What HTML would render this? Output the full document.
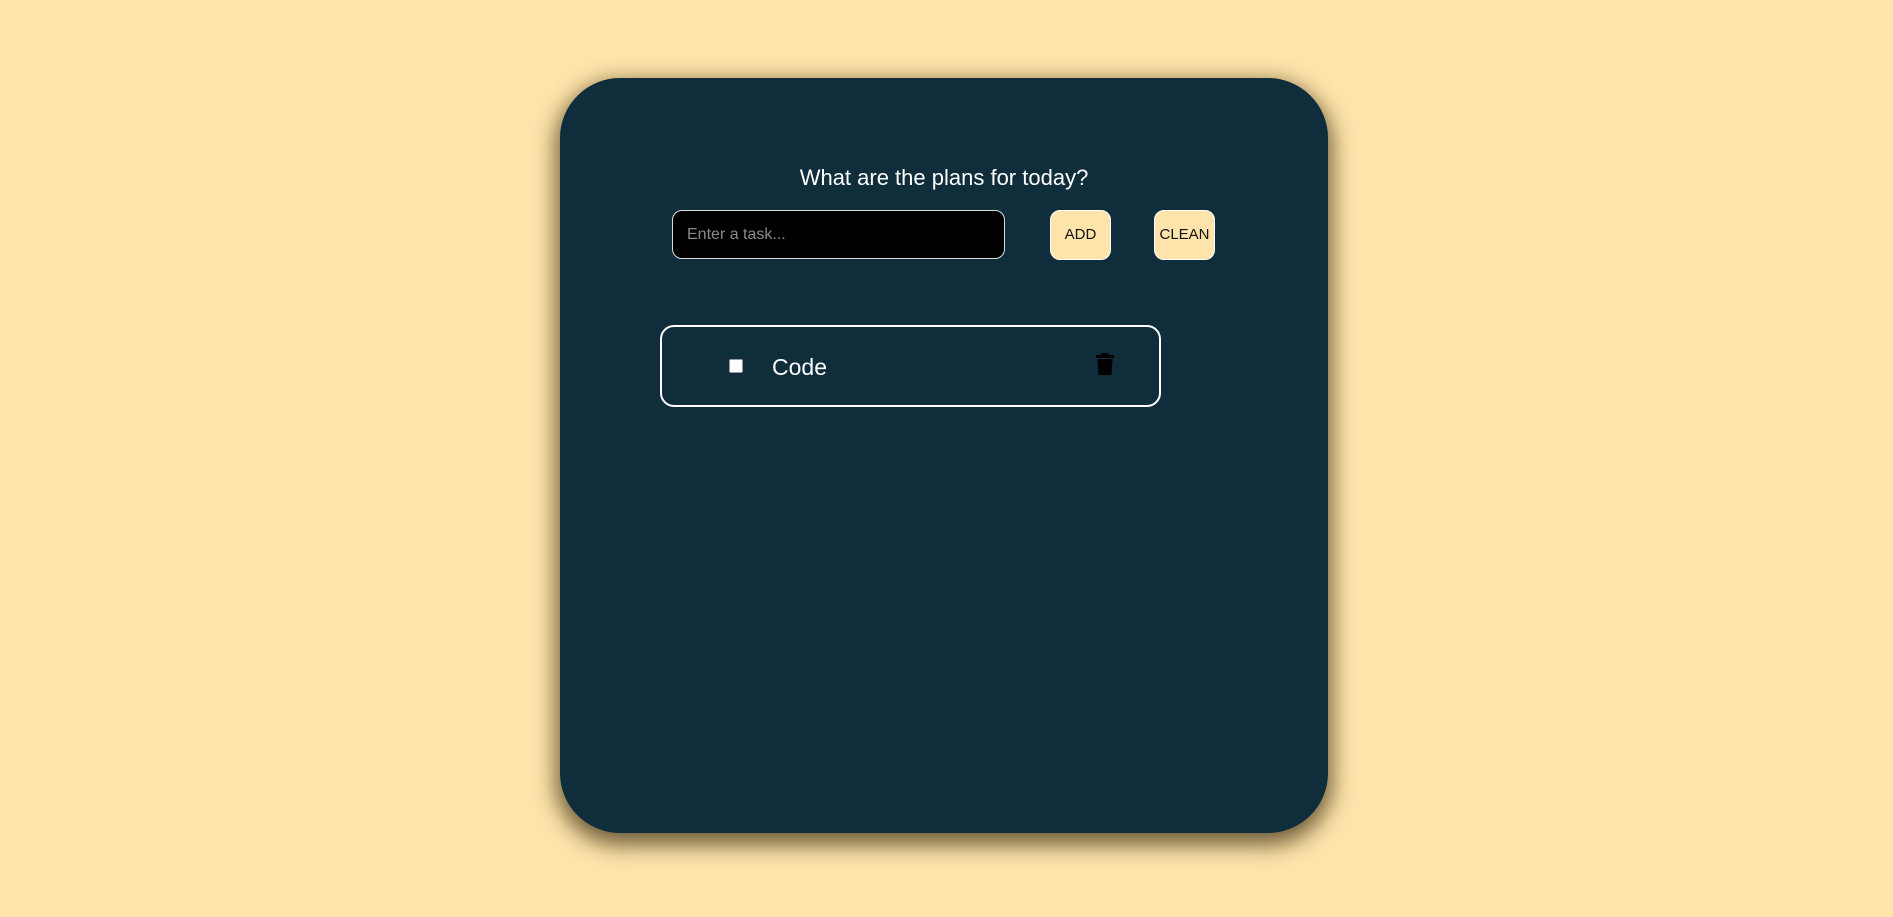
<!DOCTYPE html>
<html><head><style>
html,body{margin:0;padding:0;width:1893px;height:917px;background:#fee4aa;overflow:hidden;font-family:"Liberation Sans",sans-serif;}
.card{position:absolute;left:560px;top:78px;width:768px;height:755px;background:#0f2d3a;border-radius:60px;box-shadow:0 8px 22px 4px rgba(50,35,10,0.7);}
h1{position:absolute;left:0;width:768px;top:87px;margin:0;text-align:center;color:#fff;font-weight:300;font-size:22px;}
.inp{position:absolute;left:112px;top:132px;height:47px;background:#000;border:1.5px solid #ddd;border-radius:10px;color:#8a8a8a;font-size:16px;line-height:47px;padding-left:14px;box-sizing:content-box;width:317px;}
.btn{position:absolute;top:132px;width:59px;height:48px;background:#fee4aa;border:1px solid #fff;border-radius:10px;color:#111;font-size:15px;text-align:center;line-height:48px;}
.task{position:absolute;left:100px;top:247px;width:497px;height:78px;border:2px solid #fff;border-radius:14px;}
.cb{position:absolute;left:67px;top:32px;width:12px;height:12px;background:#fff;border:1px solid #999;border-radius:2px;}
.code{position:absolute;left:110px;top:27px;color:#fff;font-size:23px;font-weight:300;}
</style></head><body>
<div class="card">
<h1>What are the plans for today?</h1>
<div class="inp">Enter a task...</div>
<div class="btn" style="left:490px">ADD</div>
<div class="btn" style="left:594px">CLEAN</div>
<div class="task">
<div class="cb"></div>
<div class="code">Code</div>
<svg style="position:absolute;left:434px;top:26px" width="18" height="22" viewBox="0 0 18 22"><path d="M6 0h6l1 2h5v3H0V2h5z" fill="#000"/><path d="M1.5 6h15l-1 15a1 1 0 0 1-1 1h-11a1 1 0 0 1-1-1z" fill="#000"/></svg>
</div>
</div>
</body></html>
